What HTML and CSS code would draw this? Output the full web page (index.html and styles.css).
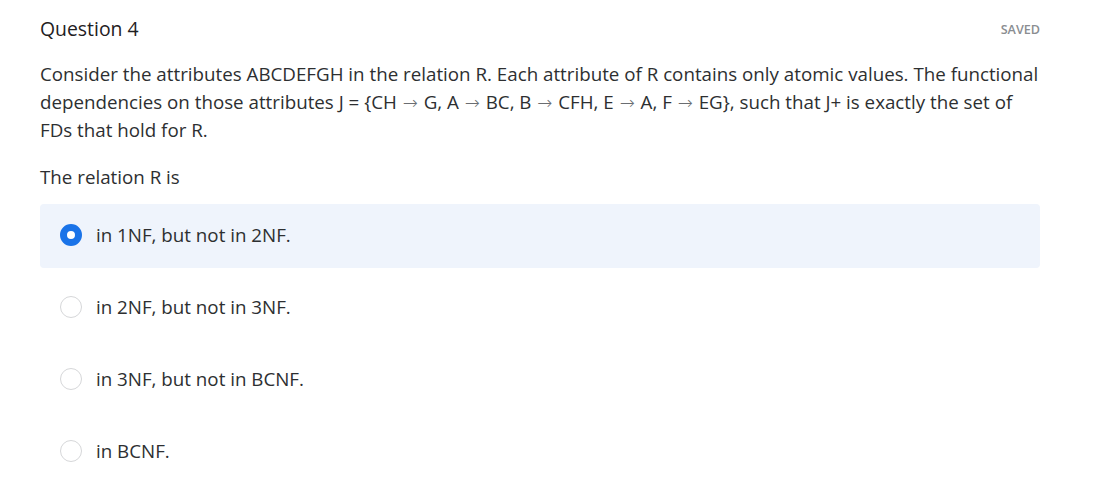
FILE: index.html
```html
<!DOCTYPE html>
<html lang="en">
<head>
<meta charset="utf-8">
<link rel="stylesheet" href="styles.css">
</head>
<body>
<div class="question">
  <div class="header">
    <h2 class="title">Question 4</h2>
    <span class="status">SAVED</span>
  </div>
  <p class="prompt">Consider the attributes ABCDEFGH in the relation R. Each attribute of R contains only atomic values. The functional dependencies on those attributes J = {CH <span class="arrow">→</span> G, A <span class="arrow">→</span> BC, B <span class="arrow">→</span> CFH, E <span class="arrow">→</span> A, F <span class="arrow">→</span> EG}, such that J+ is exactly the set of FDs that hold for R.</p>
  <p class="sub">The relation R is</p>
  <div class="options">
    <div class="option selected"><span class="radio"></span><span class="label">in 1NF, but not in 2NF.</span></div>
    <div class="option"><span class="radio"></span><span class="label">in 2NF, but not in 3NF.</span></div>
    <div class="option"><span class="radio"></span><span class="label">in 3NF, but not in BCNF.</span></div>
    <div class="option"><span class="radio"></span><span class="label">in BCNF.</span></div>
  </div>
</div>
</body>
</html>
```
FILE: styles.css
```css
html, body {
  margin: 0;
  padding: 0;
  background: #ffffff;
}
body {
  font-family: "Open Sans", "Liberation Sans", sans-serif;
  color: #2d2f31;
}
.question {
  width: 1000px;
  margin-left: 40px;
  padding-top: 16px;
}
.header {
  display: flex;
  justify-content: space-between;
  align-items: center;
  height: 26px;
}
.title {
  margin: 0;
  font-size: 19.4px;
  font-weight: 500;
  line-height: 26px;
  color: #1f2022;
}
.status {
  font-size: 12.6px;
  font-weight: 600;
  color: #8a8d91;
}
.prompt {
  margin: 18px 0 0;
  font-size: 18.75px;
  line-height: 28px;
}
.arrow {
  font-family: "DejaVu Sans", sans-serif;
  font-size: 18px;
  font-weight: 200;
  line-height: 1;
  margin: 0 1px;
  color: #6a6d71;
}
.sub {
  margin: 19px 0 0;
  font-size: 18.75px;
  line-height: 28px;
}
.options {
  margin-top: 13px;
  display: flex;
  flex-direction: column;
  gap: 8px;
}
.option {
  box-sizing: border-box;
  display: flex;
  align-items: center;
  gap: 14px;
  height: 64px;
  padding: 0 0 3px 20px;
  border-radius: 4px;
  font-size: 18.75px;
}
.option.selected {
  background: #eff4fc;
}
.radio {
  box-sizing: border-box;
  width: 22px;
  height: 22px;
  border-radius: 50%;
  border: 1.5px solid #d6d7d9;
  background: #fff;
}
.option.selected .radio {
  border: 7px solid #1a73e8;
}
```
